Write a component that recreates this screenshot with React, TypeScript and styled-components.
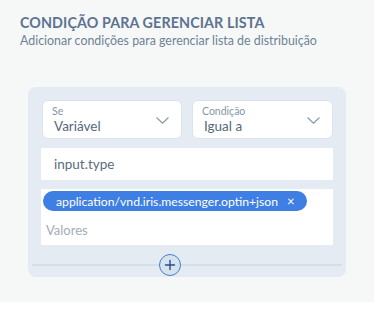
import React from "react";
import styled, { createGlobalStyle } from "styled-components";

const GlobalStyle = createGlobalStyle`
  body {
    margin: 0;
    background: #ffffff;
    font-family: Lato, "Open Sans", sans-serif;
  }
`;

function Chevron() {
  return (
    <svg width="13" height="7" viewBox="0 0 13 7" fill="none">
      <path d="M0.8 0.8l5.7 5.4 5.7-5.4" stroke="#8a9bb0" strokeWidth="1.2" strokeLinecap="round" strokeLinejoin="round" />
    </svg>
  );
}

interface ISelectField {
  label: string;
  value: string;
}

function SelectField({ label, value }: ISelectField) {
  return (
    <S.Select>
      <div className="select__text">
        <span className="select__label">{label}</span>
        <span className="select__value">{value}</span>
      </div>
      <Chevron />
    </S.Select>
  );
}

export default function App() {
  return (
    <>
      <GlobalStyle />
      <S.Panel>
        <S.Title>CONDIÇÃO PARA GERENCIAR LISTA</S.Title>
        <S.Subtitle>Adicionar condições para gerenciar lista de distribuição</S.Subtitle>
        <S.Card>
          <S.SelectRow>
            <SelectField label="Se" value="Variável" />
            <SelectField label="Condição" value="Igual a" />
          </S.SelectRow>
          <S.TextInput>input.type</S.TextInput>
          <S.ValuesBox>
            <S.Chip>
              application/vnd.iris.messenger.optin+json
              <span className="chip__close">×</span>
            </S.Chip>
            <S.Placeholder>Valores</S.Placeholder>
          </S.ValuesBox>
          <S.Footer>
            <S.AddButton>
              <svg width="12" height="12" viewBox="0 0 12 12">
                <path d="M6 1.5v9M1.5 6h9" stroke="#2f4c8c" strokeWidth="1.4" strokeLinecap="round" />
              </svg>
            </S.AddButton>
          </S.Footer>
        </S.Card>
      </S.Panel>
    </>
  );
}

const S = {
  Panel: styled.div`
    width: 374px;
    height: 302px;
    box-sizing: border-box;
    background: #f6f8f8;
    padding: 14px 20px 0;
  `,
  Title: styled.div`
    font-size: 14.3px;
    line-height: 17px;
    font-weight: 700;
    color: #5d7391;
    letter-spacing: 0.1px;
  `,
  Subtitle: styled.div`
    margin-top: 2px;
    font-size: 12.4px;
    line-height: 16px;
    color: #6f8296;
  `,
  Card: styled.div`
    margin: 38px 0 0 8px;
    width: 318px;
    height: 190px;
    box-sizing: border-box;
    background: #e4ebf3;
    border-radius: 8px;
    padding: 13px 13px 0 13px;
    display: flex;
    flex-direction: column;
  `,
  SelectRow: styled.div`
    display: grid;
    grid-template-columns: 140px 141px;
    gap: 10px;
    margin-left: 1px;
  `,
  Select: styled.div`
    height: 39px;
    box-sizing: border-box;
    background: #ffffff;
    border: 1px solid #dbe4ee;
    border-radius: 6px;
    padding: 0 12px 0 9px;
    display: flex;
    align-items: center;
    justify-content: space-between;
    .select__text {
      display: flex;
      flex-direction: column;
    }
    .select__label {
      font-size: 10.5px;
      line-height: 13px;
      color: #8595a8;
    }
    .select__value {
      font-size: 13.5px;
      line-height: 17px;
      color: #56687d;
      padding-left: 2px;
    }
    svg {
      margin-top: 1px;
    }
  `,
  TextInput: styled.div`
    margin-top: 9px;
    height: 32px;
    background: #ffffff;
    display: flex;
    align-items: center;
    padding-left: 13px;
    font-size: 13.5px;
    color: #5a6b80;
  `,
  ValuesBox: styled.div`
    margin-top: 9px;
    height: 56px;
    background: #ffffff;
    padding: 2px 2px 0;
    box-sizing: border-box;
    display: flex;
    flex-direction: column;
    align-items: flex-start;
  `,
  Chip: styled.div`
    height: 20px;
    box-sizing: border-box;
    padding: 0 12px 0 13px;
    border-radius: 10px;
    background: #3f7fe4;
    color: #ffffff;
    font-size: 12.2px;
    display: flex;
    align-items: center;
    .chip__close {
      margin-left: 9px;
      font-size: 13px;
    }
  `,
  Placeholder: styled.div`
    margin-top: 11px;
    padding-left: 3px;
    font-size: 13px;
    color: #a3acb6;
  `,
  Footer: styled.div`
    margin: 19px -9px 0;
    height: 2px;
    background: #d3dfea;
    display: flex;
    align-items: center;
  `,
  AddButton: styled.div`
    margin-left: 127px;
    width: 22px;
    height: 22px;
    box-sizing: border-box;
    border-radius: 50%;
    border: 1.5px solid #4b7ec2;
    background: #d4e3ef;
    display: flex;
    align-items: center;
    justify-content: center;
  `,
};
